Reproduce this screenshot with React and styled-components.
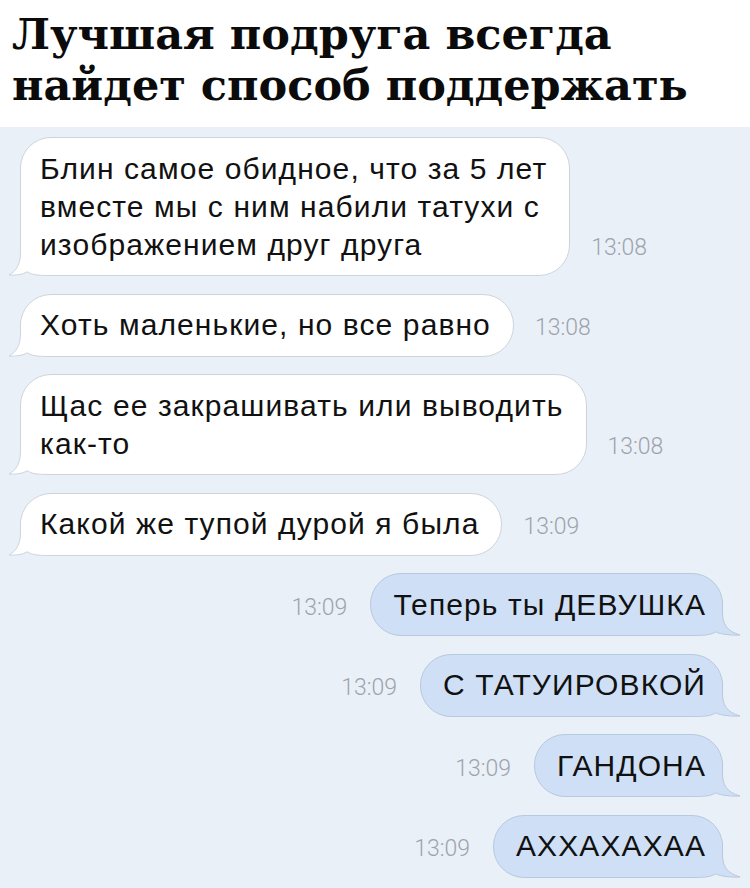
import React from "react";
import styled, { createGlobalStyle } from "styled-components";

const Global = createGlobalStyle`
  html, body { margin: 0; padding: 0; background: #eaf0f8; }
  body { width: 750px; }
`;

const Page = styled.div`
  width: 750px;
  height: 888px;
  overflow: hidden;
  display: flex;
  flex-direction: column;
  background: #eaf0f8;
`;

const Header = styled.header`
  background: #ffffff;
  height: 127px;
  box-sizing: border-box;
  padding: 9px 0 0 12px;
`;

const Title = styled.h1`
  margin: 0;
  font-family: "DejaVu Serif", "Liberation Serif", serif;
  font-weight: 700;
  font-size: 43px;
  line-height: 51px;
  color: #0b0b0b;
  white-space: nowrap;
`;

const Chat = styled.main`
  flex: 1;
  display: flex;
  flex-direction: column;
  gap: 17.5px;
  padding: 10px 0 0 0;
`;

const Row = styled.div`
  display: flex;
  align-items: last baseline;
  justify-content: ${(p) => (p.$out ? "flex-end" : "flex-start")};
  gap: ${(p) => (p.$out ? "23px" : "21px")};
  padding: ${(p) => (p.$out ? "0 27px 0 0" : "0 0 0 20px")};
`;

const Bubble = styled.div`
  position: relative;
  border-radius: 31px;
  border: 1px solid ${(p) => (p.$out ? "#b7c9de" : "#cfd4dc")};
  background: ${(p) => (p.$out ? "#cfe0f6" : "#ffffff")};
  padding: ${(p) => (p.$out ? "11.5px 16px 11.5px 22px" : "11.5px 22px 11.5px 19px")};
  font-family: "Liberation Sans", Arial, sans-serif;
  font-size: 30px;
  letter-spacing: 1.1px;
  line-height: 38px;
  color: #111111;
  white-space: nowrap;
`;

const Text = styled.span`
  position: relative;
  z-index: 1;
`;

const Time = styled.span`
  font-family: Roboto, "Liberation Sans", sans-serif;
  font-weight: 300;
  font-size: 23px;
  color: #9ea3ab;
`;

const TailSvg = styled.svg`
  position: absolute;
  bottom: -1px;
  ${(p) =>
    p.$out
      ? `right: ${-(p.$w + 1)}px; transform: scaleX(-1);`
      : `left: ${-(p.$w + 1)}px;`}
`;

function Tail({ out }) {
  const w = out ? 18 : 12;
  const W = w + 30;
  const H = 36;
  const e = w + 0.5;
  const outline = `M${e},0 L${e},12 C${e},24 ${e - 4},31 1,35 C8,35.6 ${e + 2},34.5 ${e + 7},31.8 C${e + 11},34.6 ${e + 16},35.5 ${W},35.5`;
  const fill = `${outline} L${W},0 Z`;
  const bg = out ? "#cfe0f6" : "#ffffff";
  const stroke = out ? "#b7c9de" : "#cfd4dc";
  return (
    <TailSvg $out={out} $w={w} width={W} height={H} viewBox={`0 0 ${W} ${H}`}>
      <path d={fill} fill={bg} stroke="none" />
      <path d={outline} fill="none" stroke={stroke} strokeWidth="1" />
    </TailSvg>
  );
}

const messages = [
  { out: false, time: "13:08", lines: ["Блин самое обидное, что за 5 лет", "вместе мы с ним набили татухи с", "изображением друг друга"] },
  { out: false, time: "13:08", lines: ["Хоть маленькие, но все равно"] },
  { out: false, time: "13:08", lines: ["Щас ее закрашивать или выводить", "как-то"] },
  { out: false, time: "13:09", lines: ["Какой же тупой дурой я была"] },
  { out: true, time: "13:09", lines: ["Теперь ты ДЕВУШКА"] },
  { out: true, time: "13:09", lines: ["С ТАТУИРОВКОЙ"] },
  { out: true, time: "13:09", lines: ["ГАНДОНА"] },
  { out: true, time: "13:09", lines: ["АХХАХАХАА"] },
];

function Message({ out, time, lines }) {
  const bubble = (
    <Bubble $out={out}>
      <Tail out={out} />
      <Text>
        {lines.map((l, i) => (
          <React.Fragment key={i}>
            {i > 0 && <br />}
            {l}
          </React.Fragment>
        ))}
      </Text>
    </Bubble>
  );
  return (
    <Row $out={out}>
      {out && <Time>{time}</Time>}
      {bubble}
      {!out && <Time>{time}</Time>}
    </Row>
  );
}

export default function App() {
  return (
    <Page>
      <Global />
      <Header>
        <Title>
          Лучшая подруга всегда
          <br />
          найдет способ поддержать
        </Title>
      </Header>
      <Chat>
        {messages.map((m, i) => (
          <Message key={i} {...m} />
        ))}
      </Chat>
    </Page>
  );
}
